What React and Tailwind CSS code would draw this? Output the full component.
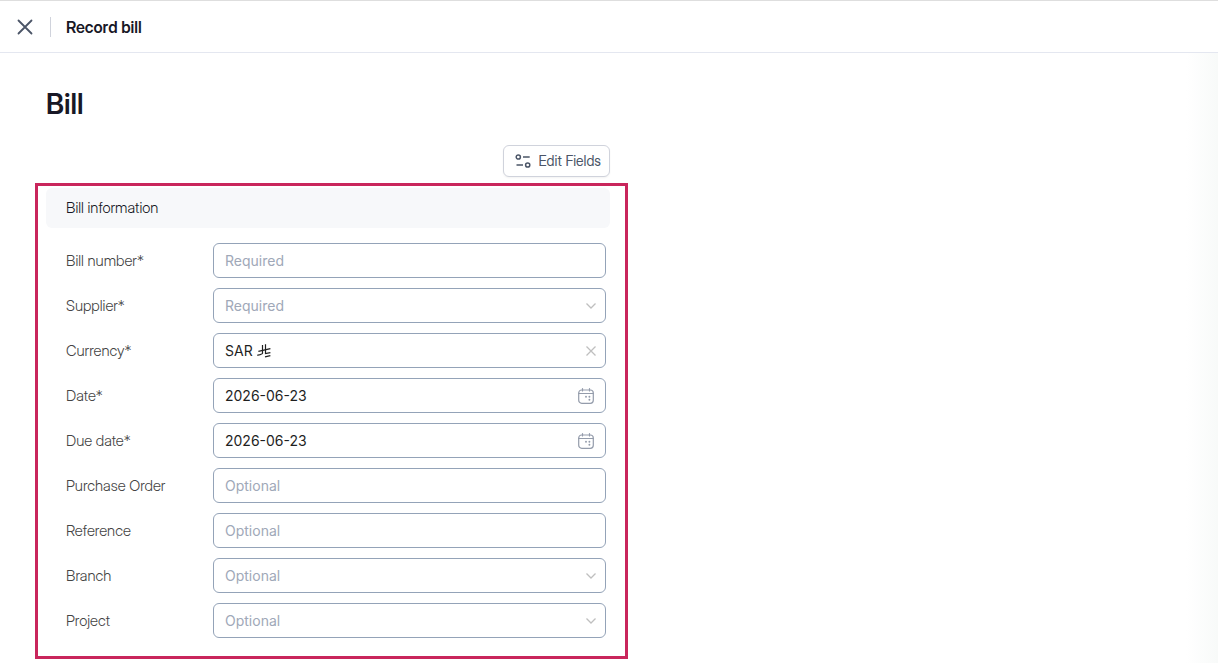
import React from 'react';

const fields = [
  { id: 'bill-number', label: 'Bill number*', type: 'text', placeholder: 'Required' },
  { id: 'supplier', label: 'Supplier*', type: 'select', placeholder: 'Required' },
  { id: 'currency', label: 'Currency*', type: 'currency', value: 'SAR' },
  { id: 'date', label: 'Date*', type: 'date', value: '2026-06-23' },
  { id: 'due-date', label: 'Due date*', type: 'date', value: '2026-06-23' },
  { id: 'purchase-order', label: 'Purchase Order', type: 'text', placeholder: 'Optional' },
  { id: 'reference', label: 'Reference', type: 'text', placeholder: 'Optional' },
  { id: 'branch', label: 'Branch', type: 'select', placeholder: 'Optional' },
  { id: 'project', label: 'Project', type: 'select', placeholder: 'Optional' },
];

const CloseIcon = () => (
  <svg width="16" height="16" viewBox="0 0 16 16" fill="none" stroke="currentColor" strokeWidth="1.8" strokeLinecap="round">
    <path d="M1.5 1.5l13 13M14.5 1.5l-13 13" />
  </svg>
);

const FieldsIcon = () => (
  <svg width="16" height="16" viewBox="0 0 16 16" fill="none" stroke="currentColor" strokeWidth="1.5">
    <circle cx="3.3" cy="4" r="2.1" />
    <path d="M8 4h6.7M1.5 12H8" />
    <circle cx="12.7" cy="12" r="2.1" />
  </svg>
);

const ChevronIcon = () => (
  <svg width="10" height="6" viewBox="0 0 10 6" fill="none" stroke="currentColor" strokeWidth="1.3">
    <path d="M0.5 0.5L5 5l4.5-4.5" />
  </svg>
);

const ClearIcon = () => (
  <svg width="10" height="10" viewBox="0 0 10 10" fill="none" stroke="currentColor" strokeWidth="1.3">
    <path d="M0.5 0.5l9 9M9.5 0.5l-9 9" />
  </svg>
);

const CalendarIcon = () => (
  <svg width="16" height="16" viewBox="0 0 16 16" fill="none" stroke="currentColor" strokeWidth="1.2" strokeLinecap="round">
    <rect x="0.7" y="2" width="14.6" height="13.3" rx="3" />
    <path d="M0.7 5.5h14.6M4.5 0.6v2.4M11.5 0.6v2.4" />
    <path d="M8 8.7h0.01M11.4 8.7h0.01M11.4 11.8h0.01" strokeWidth="1.9" />
  </svg>
);

// Saudi riyal sign
const RiyalIcon = () => (
  <svg width="14" height="14" viewBox="0 0 14 14" fill="none" stroke="currentColor" strokeWidth="1.2">
    <path d="M5.5 1v8.2c0 1-1.6 1.3-5.2 2.1" />
    <path d="M8.5 0.2v9.4l4.9-1" />
    <path d="M1.4 7.3l12-2.6" />
    <path d="M8 12.8l5.4-1.1" />
  </svg>
);

const inputClass =
  'block w-full h-[35px] rounded-md border border-[#94a3b8] bg-white px-[11px] text-sm text-[#1f1f1f] placeholder:text-[#a0a8b8] outline-none focus:border-indigo-500';

const Field = ({ field }) => {
  const { id, label, type, placeholder, value } = field;

  return (
    <div className="flex items-center">
      <label htmlFor={id} className="w-[147px] shrink-0 font-['Inter_Display',Inter,sans-serif] text-[15px] leading-5 font-light text-[#444444]">
        {label}
      </label>
      <div className="relative flex-1 min-w-0">
        {type === 'select' ? (
          <>
            <select id={id} defaultValue="" className={`${inputClass} appearance-none !text-[#a0a8b8]`}>
              <option value="">{placeholder}</option>
            </select>
            <span className="absolute inset-y-0 right-[10px] flex items-center text-[#bfbfbf] pointer-events-none">
              <ChevronIcon />
            </span>
          </>
        ) : (
          <input id={id} type="text" placeholder={placeholder} defaultValue={value} className={inputClass} />
        )}

        {type === 'currency' && (
          <>
            <span className="absolute inset-y-0 left-11 flex items-center text-[#1f1f1f] pointer-events-none">
              <RiyalIcon />
            </span>
            <button type="button" aria-label="Clear currency" className="absolute inset-y-0 right-[10px] flex items-center text-[#bfbfbf]">
              <ClearIcon />
            </button>
          </>
        )}

        {type === 'date' && (
          <button type="button" aria-label="Open calendar" className="absolute inset-y-0 right-3 flex items-center text-[#949cab]">
            <CalendarIcon />
          </button>
        )}
      </div>
    </div>
  );
};

const App = () => {
  return (
    <div className="min-h-screen flex flex-col bg-white font-['Inter',sans-serif] text-[#181826]">
      {/* Top bar */}
      <header className="flex items-center h-[53px] px-[17px] border-t border-t-[#dedede] border-b border-b-[#e4e7f0]">
        <button type="button" aria-label="Close" className="text-[#4b5567]">
          <CloseIcon />
        </button>
        <div className="w-px h-5 ml-[17px] mr-[15px] bg-[#d0d3dc]" />
        <p className="font-['Inter_Display',Inter,sans-serif] text-base font-semibold">Record bill</p>
      </header>

      <div className="flex flex-1">
        <main className="w-full max-w-[628px] pl-[35px] pt-[33px]">
          <h1 className="pl-[11px] font-['Inter_Display',Inter,sans-serif] text-[28px] leading-9 font-semibold">Bill</h1>

          <div className="flex justify-end mt-[23px] pr-[18px]">
            <button
              type="button"
              className="flex items-center gap-[7px] h-8 pl-[11px] pr-2 rounded-md border border-[#d0d3dc] bg-white font-['Inter_Display',Inter,sans-serif] text-sm text-[#4b5567] shadow-xs"
            >
              <FieldsIcon />
              Edit Fields
            </button>
          </div>

          {/* Bill form */}
          <section className="mt-[6px] border-3 border-[#c9265c] pt-[2px] pb-[18px]">
            <h2 className="flex items-center h-10 ml-2 mr-[15px] px-5 rounded-md bg-[#f7f8fa] font-['Inter_Display',Inter,sans-serif] text-[15px] leading-5 font-light">
              Bill information
            </h2>
            <form className="flex flex-col gap-[10px] mt-[15px] pl-7 pr-[19px]">
              {fields.map((field) => (
                <Field key={field.id} field={field} />
              ))}
            </form>
          </section>
        </main>

        {/* Soft shade along the right edge */}
        <div className="w-8 ml-auto bg-gradient-to-r from-white to-[#f8faf9]" />
      </div>
    </div>
  );
};

export default App;
